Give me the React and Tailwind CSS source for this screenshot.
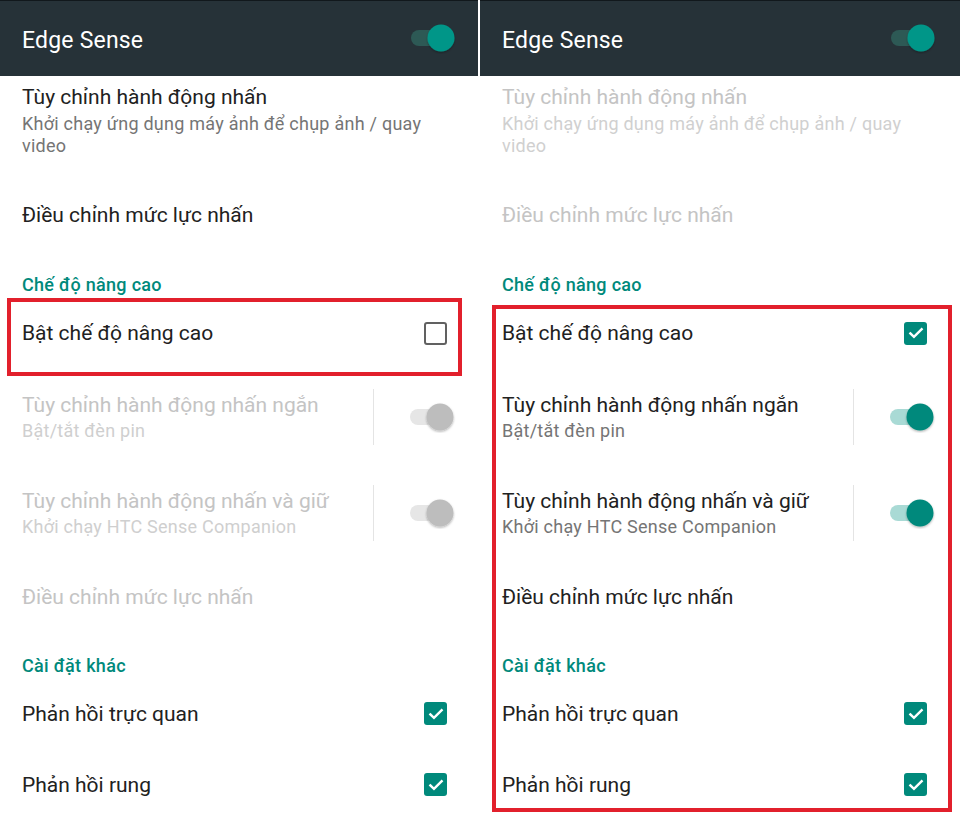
const FONT = { fontFamily: "Roboto, 'Noto Sans', sans-serif" };

function Switch({ variant }) {
  // variant: "header" | "on" | "off"
  const track =
    variant === "header" ? "#2d5955" : variant === "on" ? "#a9dad5" : "#e6e6e6";
  const thumb =
    variant === "header" ? "#009688" : variant === "on" ? "#00897b" : "#bdbdbd";
  return (
    <svg width="48" height="32" viewBox="0 0 48 32" className="shrink-0">
      <defs>
        <filter id={`sh-${variant}`} x="-30%" y="-30%" width="160%" height="170%">
          <feDropShadow dx="0" dy="1.2" stdDeviation="1.1" floodColor="#000" floodOpacity="0.3" />
        </filter>
      </defs>
      <rect x="1" y="8" width="42" height="16" rx="8" fill={track} />
      <circle cx="31" cy="16" r="13.5" fill={thumb} filter={`url(#sh-${variant})`} />
    </svg>
  );
}

function Checkbox({ checked }) {
  if (!checked) {
    return (
      <div className="w-[23px] h-[23px] shrink-0 rounded-[3px] border-2 border-[#616161] bg-white" />
    );
  }
  return (
    <div className="w-[23px] h-[23px] shrink-0 rounded-[3px] bg-[#00897b] flex items-center justify-center">
      <svg width="18" height="18" viewBox="0 0 24 24" fill="none">
        <path d="M4.5 12.5l4.8 4.6L19.5 7" stroke="#fff" strokeWidth="3.2" strokeLinecap="square" />
      </svg>
    </div>
  );
}

function Category({ label, h, pt }) {
  return (
    <div className="pl-[22px]" style={{ height: h, paddingTop: pt }}>
      <p className="text-[18px] leading-[20px] tracking-[0.3px] font-medium text-[#00897b]">{label}</p>
    </div>
  );
}

function CheckRow({ title, checked, h, disabled }) {
  return (
    <div className="flex items-center pl-[22px]" style={{ height: h }}>
      <p
        className={`w-[402px] text-[21px] leading-[24px] ${
          disabled ? "text-[#c4c4c4]" : "text-[#212121]"
        }`}
      >
        {title}
      </p>
      <Checkbox checked={checked} />
    </div>
  );
}

function PlainRow({ title, h, disabled }) {
  return (
    <div className="flex items-center pl-[22px]" style={{ height: h }}>
      <p className={`text-[21px] leading-[24px] ${disabled ? "text-[#c4c4c4]" : "text-[#212121]"}`}>
        {title}
      </p>
    </div>
  );
}

function SwitchRow({ title, sub, on }) {
  return (
    <div className="flex items-center pl-[22px] h-[96px]">
      <div className="w-[351px]">
        <p className={`text-[21px] leading-[24px] ${on ? "text-[#212121]" : "text-[#c4c4c4]"}`}>
          {title}
        </p>
        <p
          className={`mt-[3px] text-[18px] leading-[22px] tracking-[0.25px] ${
            on ? "text-[#757575]" : "text-[#cfcfcf]"
          }`}
        >
          {sub}
        </p>
      </div>
      <div className="w-px h-[56px] bg-[#e4e4e4]" />
      <div className="ml-[35px]">
        <Switch variant={on ? "on" : "off"} />
      </div>
    </div>
  );
}

function Panel({ advanced, width }) {
  const topDisabled = advanced;
  return (
    <div className="relative bg-white h-[820px] overflow-hidden" style={{ width }}>
      <div className="h-[76px] bg-[#263238] border-t border-[#11181c] flex items-center pl-[22px]">
        <h1 className="w-[388px] mt-[4px] text-[23px] leading-[28px] tracking-[0.2px] text-white font-normal">
          Edge Sense
        </h1>
        <div className="-mt-[1px]">
          <Switch variant="header" />
        </div>
      </div>

      <div className="h-[104px] pl-[22px] pt-[9px]">
        <p className={`text-[21px] leading-[24px] ${topDisabled ? "text-[#c4c4c4]" : "text-[#212121]"}`}>
          Tùy chỉnh hành động nhấn
        </p>
        <p
          className={`mt-[4px] max-w-[430px] text-[18px] leading-[22px] tracking-[0.25px] ${
            topDisabled ? "text-[#d0d0d0]" : "text-[#757575]"
          }`}
        >
          Khởi chạy ứng dụng máy ảnh để chụp ảnh / quay video
        </p>
      </div>

      <PlainRow title="Điều chỉnh mức lực nhấn" h={70} disabled={topDisabled} />

      <Category label="Chế độ nâng cao" h={58} pt={25} />

      <CheckRow title="Bật chế độ nâng cao" checked={advanced} h={50} />

      <div className="h-[11px]" />

      <SwitchRow title="Tùy chỉnh hành động nhấn ngắn" sub="Bật/tắt đèn pin" on={advanced} />
      <SwitchRow
        title="Tùy chỉnh hành động nhấn và giữ"
        sub="Khởi chạy HTC Sense Companion"
        on={advanced}
      />

      <PlainRow title="Điều chỉnh mức lực nhấn" h={72} disabled={!advanced} />

      <Category label="Cài đặt khác" h={45} pt={23} />

      <CheckRow title="Phản hồi trực quan" checked h={71} />
      <CheckRow title="Phản hồi rung" checked h={71} />

      {/* red highlight annotation */}
      {advanced ? (
        <div className="absolute left-[12px] top-[305px] w-[460px] h-[507px] border-[4px] border-[#e2202c]" />
      ) : (
        <div className="absolute left-[7px] top-[298px] w-[455px] h-[78px] border-[4px] border-[#e2202c]" />
      )}
    </div>
  );
}

export default function App() {
  return (
    <div className="w-[960px] h-[820px] flex gap-[2px] bg-white overflow-hidden" style={FONT}>
      <Panel advanced={false} width={478} />
      <Panel advanced width={480} />
    </div>
  );
}
